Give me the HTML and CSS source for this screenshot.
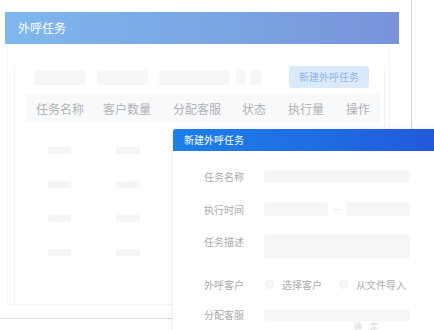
FILE: index.html
```html
<!DOCTYPE html>
<html lang="zh">
<head>
<meta charset="utf-8">
<link rel="stylesheet" href="styles.css">
</head>
<body>
<div class="page">
  <div class="app">
    <div class="title-bar">外呼任务</div>
    <div class="card">
      <div class="panel">
        <div class="filters">
          <span class="ph w52"></span>
          <span class="ph w51"></span>
          <span class="ph w71"></span>
          <span class="ph w10"></span>
          <span class="ph w12"></span>
          <span class="spacer"></span>
          <button class="new-btn">新建外呼任务</button>
        </div>
        <div class="thead">
          <span class="th c1">任务名称</span>
          <span class="th c2">客户数量</span>
          <span class="th c3">分配客服</span>
          <span class="th c4">状态</span>
          <span class="th c5">执行量</span>
          <span class="th c6">操作</span>
        </div>
        <div class="rows">
          <div class="row"><span class="cell a"></span><span class="cell b"></span></div>
          <div class="row"><span class="cell a"></span><span class="cell b"></span></div>
          <div class="row"><span class="cell a"></span><span class="cell b"></span></div>
          <div class="row"><span class="cell a"></span><span class="cell b"></span></div>
        </div>
      </div>
    </div>
    <div class="footer-line"></div>
  </div>

  <div class="modal">
    <div class="modal-head">新建外呼任务</div>
    <div class="modal-body">
      <div class="frow r1">
        <span class="label">任务名称</span>
        <span class="field full h13"></span>
      </div>
      <div class="frow r2">
        <span class="label">执行时间</span>
        <span class="range">
          <span class="field half h14"></span>
          <span class="dash"></span>
          <span class="field half h14"></span>
        </span>
      </div>
      <div class="frow r3 top">
        <span class="label">任务描述</span>
        <span class="field full h25"></span>
      </div>
      <div class="frow r4">
        <span class="label">外呼客户</span>
        <span class="radios">
          <span class="radio"><i></i>选择客户</span>
          <span class="radio"><i></i>从文件导入</span>
        </span>
      </div>
      <div class="frow r5">
        <span class="label">分配客服</span>
        <span class="field full h12"></span>
      </div>
      <div class="foot-marks"><span>确</span><span>定</span></div>
    </div>
  </div>
</div>
</body>
</html>
```

FILE: styles.css
```css
* { box-sizing: border-box; margin: 0; padding: 0; }
html, body { background: #fff; }
body {
  font-family: "Noto Sans CJK SC", "Noto Sans", "Liberation Sans", sans-serif;
  width: 434px;
  height: 330px;
  overflow: hidden;
}
.page {
  position: relative;
  width: 434px;
  height: 330px;
  overflow: hidden;
  display: flex;
}
.app {
  width: 412px;
  height: 330px;
  border-right: 1px solid #d2d4d8;
  padding-top: 12px;
  display: flex;
  flex-direction: column;
}
.title-bar {
  margin-left: 5px;
  width: 394px;
  height: 32px;
  background: linear-gradient(90deg, #80b7ee 0%, #7aa7e6 50%, #7a93da 100%);
  color: #fff;
  font-size: 12px;
  line-height: 32px;
  padding-left: 13px;
}
.card {
  margin-left: 7px;
  margin-top: 3px;
  width: 383px;
  height: 258px;
  border: 1px solid #f3f4f6;
  border-top: none;
  padding: 4px 4px 14px 6px;
}
.panel {
  height: 100%;
  border: 1px solid #f3f4f6;
  border-top: none;
  padding: 0 6px 0 11px;
}
.filters {
  display: flex;
  align-items: center;
  height: 22px;
  margin-top: 15px;
  padding-left: 8px;
  padding-right: 9px;
}
.ph {
  display: inline-block;
  height: 15px;
  background: #f6f7f8;
  border-radius: 2px;
}
.w52 { width: 52px; margin-right: 11px; }
.w51 { width: 51px; margin-right: 11px; }
.w71 { width: 71px; margin-right: 6px; }
.w10 { width: 10px; margin-right: 4px; }
.w12 { width: 12px; }
.spacer { flex: 1; }
.new-btn {
  width: 80px;
  height: 22px;
  border: none;
  border-radius: 3px;
  background: #dbeafb;
  color: #8db6e6;
  font-family: inherit;
  font-size: 10px;
  line-height: 22px;
}
.thead {
  margin-top: 6px;
  height: 28px;
  width: 354px;
  background: #f8f9fa;
  display: flex;
  align-items: center;
  font-size: 12px;
  color: #b0b2b5;
  padding-left: 10px;
}
.th { display: inline-block; white-space: nowrap; }
.c1 { width: 67px; }
.c2 { width: 70px; }
.c3 { width: 69px; }
.c4 { width: 46px; }
.c5 { width: 58px; }
.c6 { width: 30px; }
.rows {
  display: flex;
  flex-direction: column;
  padding-top: 25px;
  gap: 27px;
}
.row {
  display: flex;
  height: 7px;
  padding-left: 22px;
}
.cell {
  display: inline-block;
  height: 7px;
  background: #f4f5f6;
  border-radius: 1px;
}
.cell.a { width: 23px; margin-right: 45px; }
.cell.b { width: 24px; }
.footer-line {
  margin-top: 13px;
  width: 411px;
  border-top: 1px solid #d7e5e6;
}

/* modal overlay */
.modal {
  position: absolute;
  left: 173px;
  top: 129px;
  width: 275px;
  height: 215px;
  background: #fff;
  border-radius: 3px 3px 0 0;
  box-shadow: -2px 0 6px rgba(0, 0, 0, 0.06);
}
.modal-head {
  height: 22px;
  background: linear-gradient(90deg, #1d7fe9 0%, #1f6ce2 55%, #2357d8 100%);
  border-radius: 3px 3px 0 0;
  color: #fff;
  font-size: 10px;
  line-height: 22px;
  padding-left: 11px;
}
.modal-body {
  padding-left: 31px;
  padding-top: 19px;
  display: flex;
  flex-direction: column;
}
.frow {
  display: flex;
  align-items: center;
}
.frow.top { align-items: flex-start; }
.label {
  width: 60px;
  font-size: 10px;
  color: #aaabad;
  line-height: 13px;
  white-space: nowrap;
}
.frow.top .label { padding-top: 1px; }
.r2 { margin-top: 19px; }
.r3 { margin-top: 18px; }
.r4 { margin-top: 18px; }
.r5 { margin-top: 17px; }
.field {
  display: inline-block;
  background: #f5f6f7;
  border-radius: 3px;
}
.full { width: 146px; }
.half { width: 64px; }
.h12 { height: 12px; }
.h13 { height: 13px; }
.h14 { height: 14px; }
.h25 { height: 25px; }
.range { display: flex; align-items: center; }
.dash {
  width: 6px;
  height: 1px;
  margin: 0 6px;
  background: #e8e9eb;
}
.radios {
  display: flex;
  align-items: center;
  height: 14px;
  font-size: 10px;
  color: #aaabad;
}
.radio {
  display: flex;
  align-items: center;
  white-space: nowrap;
}
.radio i {
  display: inline-block;
  width: 9px;
  height: 9px;
  border-radius: 50%;
  background: #f6f7f8;
  border: 1px solid #f0f1f2;
  margin-left: 1px;
  margin-right: 8px;
}
.radio + .radio { margin-left: 16px; }
.foot-marks {
  display: flex;
  gap: 8px;
  margin-top: 0;
  padding-left: 150px;
  font-size: 8px;
  line-height: 9px;
  color: #d8d9db;
}
```
